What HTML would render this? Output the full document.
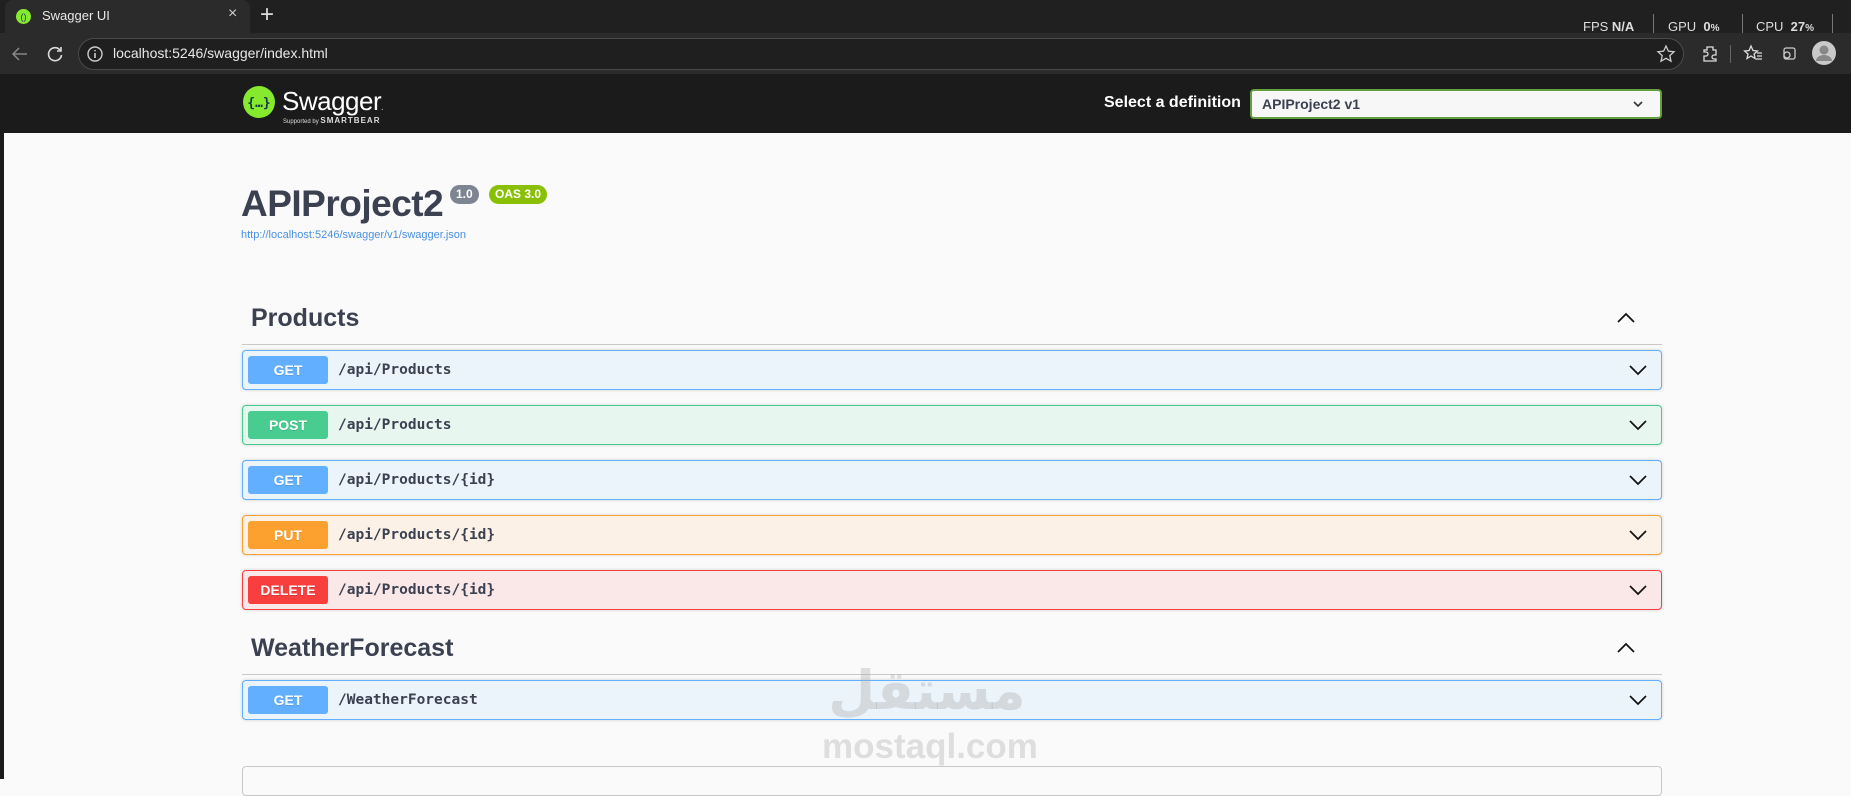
<!DOCTYPE html>
<html><head><meta charset="utf-8"><style>
*{box-sizing:border-box;margin:0;padding:0}
body{width:1851px;height:779px;overflow:hidden;background:#fafafa;font-family:"Liberation Sans",sans-serif;position:relative}
.abs{position:absolute}
.tabbar{left:0;top:0;width:1851px;height:33px;background:#202020}
.tab{left:5px;top:0;width:245px;height:34px;background:#2b2b2b;border-radius:8px 8px 0 0}
.toolbar{left:0;top:33px;width:1851px;height:41px;background:#2b2b2b}
.addr{left:78px;top:38px;width:1606px;height:32px;border-radius:16px;background:#1f1f1f;border:1px solid #4a4a4a}
.topbar{left:4px;top:74px;width:1847px;height:59px;background:#1b1b1b}
.leftstrip{left:0;top:74px;width:4px;height:705px;background:#1b1b1b}
.row{position:absolute;left:242px;width:1420px;height:40px;border:1px solid;border-radius:4px;box-shadow:0 0 3px rgba(0,0,0,.19)}
.badge{position:absolute;left:5px;top:5px;width:80px;height:28px;border-radius:3px;color:#fff;font-weight:bold;font-size:14px;text-align:center;line-height:28px;text-shadow:0 1px 0 rgba(0,0,0,.1)}
.path{position:absolute;left:95px;top:0;line-height:38px;font-family:"DejaVu Sans Mono","Liberation Mono",monospace;font-weight:bold;font-size:14.5px;color:#3b4151}
.chev{position:absolute;right:14px;top:13px}
.get{background:#ebf3fb;border-color:#61affe}.get .badge{background:#61affe}
.post{background:#e8f6f0;border-color:#49cc90}.post .badge{background:#49cc90}
.put{background:#fbf1e6;border-color:#fca130}.put .badge{background:#fca130}
.del{background:#fae7e7;border-color:#f93e3e}.del .badge{background:#f93e3e}
.h{position:absolute;left:251px;font-size:25px;font-weight:bold;color:#3b4151}
.line{position:absolute;left:242px;width:1420px;height:1px;background:#c8c8c8}
</style></head><body>
<div class="abs tabbar"></div>
<div class="abs tab"></div>
<svg class="abs" style="left:16px;top:9px" width="15" height="15"><circle cx="7.5" cy="7.5" r="7.5" fill="#85ea2d"/><text x="7.5" y="11" font-size="9" text-anchor="middle" fill="#173647" font-family="Liberation Sans">()</text></svg>
<div class="abs" style="left:42px;top:8px;color:#e8e8e8;font-size:13px">Swagger UI</div>
<div class="abs" style="left:228px;top:5px;color:#ccc;font-size:16px">×</div>
<div class="abs" style="left:260px;top:1px;color:#ddd;font-size:24px;font-weight:300">+</div>
<div class="abs" style="left:1583px;top:19px;color:#ddd;font-size:13px;white-space:nowrap">FPS <b>N/A</b></div>
<div class="abs" style="left:1653px;top:14px;width:1px;height:20px;background:#777"></div>
<div class="abs" style="left:1668px;top:19px;color:#ddd;font-size:13px;white-space:nowrap">GPU &nbsp;<b>0</b><b style="font-size:10px">%</b></div>
<div class="abs" style="left:1742px;top:14px;width:1px;height:20px;background:#777"></div>
<div class="abs" style="left:1756px;top:19px;color:#ddd;font-size:13px;white-space:nowrap">CPU &nbsp;<b>27</b><b style="font-size:10px">%</b></div>
<div class="abs" style="left:1832px;top:14px;width:1px;height:20px;background:#777"></div>
<div class="abs toolbar"></div>
<svg class="abs" style="left:10px;top:44px" width="20" height="20"><path d="M17 10H4M9 4L3 10l6 6" stroke="#888" stroke-width="1.5" fill="none"/></svg>
<svg class="abs" style="left:45px;top:44px" width="20" height="20"><path d="M15 6A6.5 6.5 0 1 0 16.5 11" stroke="#ddd" stroke-width="1.6" fill="none"/><path d="M16 3v4h-4" stroke="#ddd" stroke-width="1.6" fill="none"/></svg>
<div class="abs addr"></div>
<svg class="abs" style="left:86px;top:45px" width="18" height="18"><circle cx="9" cy="9" r="7" stroke="#ccc" stroke-width="1.4" fill="none"/><path d="M9 8v5M9 5v1.3" stroke="#ccc" stroke-width="1.6"/></svg>
<div class="abs" style="left:113px;top:45px;color:#e8e8e8;font-size:14px">localhost:5246/swagger/index.html</div>
<svg class="abs" style="left:1656px;top:44px" width="20" height="20"><path d="M10 2l2.4 5.2 5.6.6-4.2 3.8 1.2 5.6L10 14.3 5 17.2l1.2-5.6L2 7.8l5.6-.6z" stroke="#ccc" stroke-width="1.3" fill="none"/></svg>
<svg class="abs" style="left:1700px;top:44px" width="20" height="20"><path d="M7 3h6v3h3v5h-2a2 2 0 0 0 0 4h2v2H4v-5h2a2 2 0 0 0 0-4H4V6h3z" stroke="#ddd" stroke-width="1.3" fill="none"/></svg>
<div class="abs" style="left:1730px;top:45px;width:1px;height:18px;background:#666"></div>
<svg class="abs" style="left:1743px;top:44px" width="20" height="20"><path d="M8 2l2 4.5 4.5.5-3.4 3 1 4.5L8 12l-4 2.5 1-4.5-3.4-3 4.5-.5z" stroke="#ddd" stroke-width="1.3" fill="none"/><path d="M14 9h5M14 12h5M13 15h6" stroke="#ddd" stroke-width="1.3"/></svg>
<svg class="abs" style="left:1780px;top:45px" width="18" height="18"><rect x="4" y="3" width="11" height="11" rx="2" stroke="#ccc" stroke-width="1.3" fill="none"/><circle cx="7" cy="10" r="3" stroke="#ccc" stroke-width="1.3" fill="#2b2b2b"/></svg>
<svg class="abs" style="left:1812px;top:41px" width="24" height="24"><circle cx="12" cy="12" r="12" fill="#c9c9c9"/><circle cx="12" cy="9" r="4.5" fill="#888"/><path d="M4 20a8 6 0 0 1 16 0" fill="#888"/></svg>
<div class="abs topbar"></div>
<div class="abs leftstrip"></div>
<svg class="abs" style="left:242px;top:85px" width="34" height="34"><circle cx="17" cy="17" r="16" fill="#85ea2d"/><text x="17" y="22" font-size="13" font-weight="bold" text-anchor="middle" fill="#173647" font-family="DejaVu Sans Mono">{…}</text></svg>
<div class="abs" style="left:282px;top:86px;color:#fff;font-size:26px;letter-spacing:-0.5px">Swagger<span style="font-size:8px">.</span></div>
<div class="abs" style="left:283px;top:116px;color:#ddd;font-size:6px;white-space:nowrap">Supported by <b style="font-size:8px;letter-spacing:1px">SMARTBEAR</b></div>
<div class="abs" style="left:1104px;top:94px;color:#fff;font-size:16px;font-weight:bold">Select a definition</div>
<div class="abs" style="left:1250px;top:89px;width:412px;height:30px;background:#f7f7f7;border:2px solid #62a03f;border-radius:4px;font-size:14px;font-weight:bold;color:#3b4151;padding:5px 10px">APIProject2 v1</div>
<svg class="abs" style="left:1632px;top:99px" width="12" height="10"><path d="M2 3l4 4 4-4" stroke="#333" stroke-width="1.6" fill="none"/></svg>

<div class="abs" style="left:241px;top:183px;font-size:37px;font-weight:bold;color:#3b4151;letter-spacing:-0.5px">APIProject2</div>
<div class="abs" style="left:450px;top:185px;height:19px;padding:0 6px;background:#7d8492;border-radius:10px;color:#fff;font-size:12px;font-weight:bold;line-height:19px">1.0</div>
<div class="abs" style="left:489px;top:185px;height:19px;padding:0 6px;background:#89bf04;border-radius:10px;color:#fff;font-size:12px;font-weight:bold;line-height:19px">OAS 3.0</div>
<div class="abs" style="left:241px;top:229px;font-size:11px;color:#4990e2">http://localhost:5246/swagger/v1/swagger.json</div>

<div class="h" style="top:304px">Products</div>
<svg class="abs" style="left:1617px;top:312px" width="18" height="12"><path d="M1 10l8-8 8 8" stroke="#111" stroke-width="1.7" fill="none"/></svg>
<div class="line" style="top:344px"></div>

<div class="row get" style="top:350px"><div class="badge">GET</div><div class="path">/api/Products</div><svg class="chev" width="18" height="12"><path d="M1 2l8 8 8-8" stroke="#111" stroke-width="1.7" fill="none"/></svg></div>
<div class="row post" style="top:405px"><div class="badge">POST</div><div class="path">/api/Products</div><svg class="chev" width="18" height="12"><path d="M1 2l8 8 8-8" stroke="#111" stroke-width="1.7" fill="none"/></svg></div>
<div class="row get" style="top:460px"><div class="badge">GET</div><div class="path">/api/Products/{id}</div><svg class="chev" width="18" height="12"><path d="M1 2l8 8 8-8" stroke="#111" stroke-width="1.7" fill="none"/></svg></div>
<div class="row put" style="top:515px"><div class="badge">PUT</div><div class="path">/api/Products/{id}</div><svg class="chev" width="18" height="12"><path d="M1 2l8 8 8-8" stroke="#111" stroke-width="1.7" fill="none"/></svg></div>
<div class="row del" style="top:570px"><div class="badge">DELETE</div><div class="path">/api/Products/{id}</div><svg class="chev" width="18" height="12"><path d="M1 2l8 8 8-8" stroke="#111" stroke-width="1.7" fill="none"/></svg></div>

<div class="h" style="top:634px">WeatherForecast</div>
<svg class="abs" style="left:1617px;top:642px" width="18" height="12"><path d="M1 10l8-8 8 8" stroke="#111" stroke-width="1.7" fill="none"/></svg>
<div class="line" style="top:674px"></div>
<div class="row get" style="top:680px"><div class="badge">GET</div><div class="path">/WeatherForecast</div><svg class="chev" width="18" height="12"><path d="M1 2l8 8 8-8" stroke="#111" stroke-width="1.7" fill="none"/></svg></div>

<div class="abs" style="left:242px;top:766px;width:1420px;height:30px;border:1px solid #c8c8c8;border-radius:4px"></div>

<div class="abs" style="left:822px;top:656px;width:210px;text-align:center;font-family:'DejaVu Sans',sans-serif;font-size:54px;font-weight:bold;color:rgba(170,170,170,.35);line-height:70px" dir="rtl">مستقل</div>
<div class="abs" style="left:822px;top:727px;width:210px;text-align:center;font-size:35px;font-weight:bold;color:rgba(170,170,170,.35)">mostaql.com</div>
</body></html>
